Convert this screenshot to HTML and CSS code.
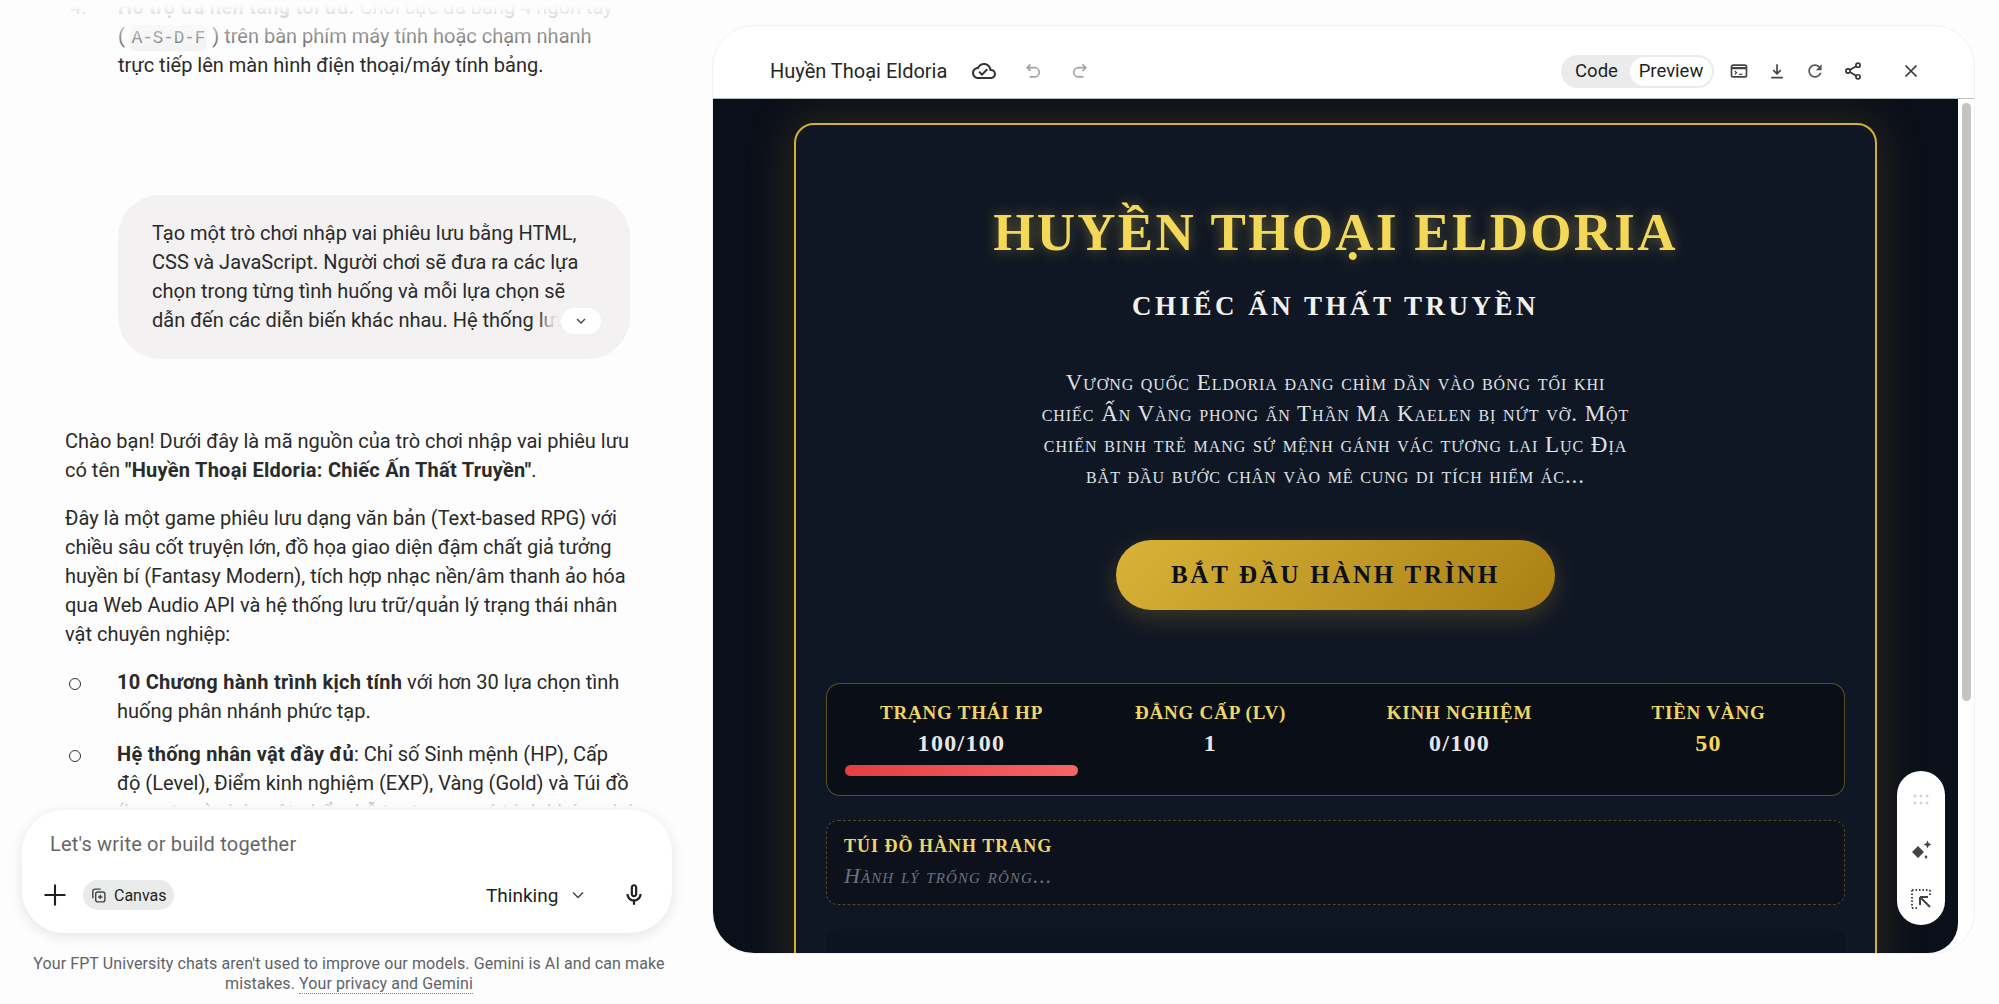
FILE: index.html
```html
<!DOCTYPE html>
<html lang="vi">
  <head>
    <meta charset="utf-8" />
    <title>Huyền Thoại Eldoria</title>
    <link rel="stylesheet" href="styles.css">
  </head>
  <body>
    <div class="page">
      <div class="left">
        <div class="chat">
          <div class="top-fade"></div>
          <ol class="tips">
            <li><span class="num">4.</span><div><b>Hỗ trợ đa nền tảng tối ưu:</b> Chơi cực đã bằng 4 ngón tay<br>( <code>A-S-D-F</code> ) trên bàn phím máy tính hoặc chạm nhanh<br>trực tiếp lên màn hình điện thoại/máy tính bảng.</div></li>
          </ol>
          <div class="bubble">
            <p>Tạo một trò chơi nhập vai phiêu lưu bằng HTML,<br>CSS và JavaScript. Người chơi sẽ đưa ra các lựa<br>chọn trong từng tình huống và mỗi lựa chọn sẽ<br>dẫn đến các diễn biến khác nhau. Hệ thống lưu</p>
            <span class="expand">
              <svg viewBox="0 0 24 24" width="16" height="16"><path d="M6 9l6 6 6-6" fill="none" stroke="#444" stroke-width="2"/></svg>
            </span>
          </div>
          <div class="answer">
            <p>Chào bạn! Dưới đây là mã nguồn của trò chơi nhập vai phiêu lưu<br>có tên <b>"Huyền Thoại Eldoria: Chiếc Ấn Thất Truyền"</b>.</p>
            <p>Đây là một game phiêu lưu dạng văn bản (Text-based RPG) với<br>chiều sâu cốt truyện lớn, đồ họa giao diện đậm chất giả tưởng<br>huyền bí (Fantasy Modern), tích hợp nhạc nền/âm thanh ảo hóa<br>qua Web Audio API và hệ thống lưu trữ/quản lý trạng thái nhân<br>vật chuyên nghiệp:</p>
            <ul class="bullets">
              <li><b>10 Chương hành trình kịch tính</b> với hơn 30 lựa chọn tình<br>huống phân nhánh phức tạp.</li>
              <li><b>Hệ thống nhân vật đầy đủ</b>: Chỉ số Sinh mệnh (HP), Cấp<br>độ (Level), Điểm kinh nghiệm (EXP), Vàng (Gold) và Túi đồ<br>(Inventory) chứa vật phẩm hỗ trợ trong quá trình khám phá.</li>
            </ul>
          </div>
          <div class="bottom-fade"></div>
        </div>
        <div class="composer">
          <div class="placeholder">Let's write or build together</div>
          <div class="composer-row">
            <svg class="plus" viewBox="0 0 24 24" width="28" height="28"><path d="M12 3v18M3 12h18" stroke="#1f1f1f" stroke-width="1.8" fill="none"/></svg>
            <span class="chip">
              <svg viewBox="0 0 24 24" width="17" height="17" fill="none" stroke="#444" stroke-width="2"><rect x="8" y="7" width="13" height="14" rx="3"/><path d="M4 16V6a3 3 0 0 1 3-3h8M14.500 11v6M11.500 14h6"/></svg>
              Canvas
            </span>
            <span class="model">Thinking</span>
            <svg class="model-arrow" viewBox="0 0 24 24" width="20" height="20"><path d="M6 9l6 6 6-6" fill="none" stroke="#444" stroke-width="1.800"/></svg>
            <svg class="mic" viewBox="0 0 24 24" width="26" height="26"><path fill="#1f1f1f" d="M12 14c1.660 0 3-1.340 3-3V5c0-1.660-1.340-3-3-3S9 3.340 9 5v6c0 1.660 1.340 3 3 3zm-1-9c0-.55.45-1 1-1s1 .45 1 1v6c0 .55-.45 1-1 1s-1-.45-1-1V5zm6 6c0 2.760-2.240 5-5 5s-5-2.240-5-5H5c0 3.530 2.610 6.430 6 6.920V21h2v-3.080c3.390-.49 6-3.390 6-6.920h-2z"/></svg>
          </div>
        </div>
        <div class="disclaimer">Your FPT University chats aren't used to improve our models. Gemini is AI and can make mistakes. <a>Your privacy and Gemini</a></div>
      </div>

      <div class="panel">
        <div class="panel-head">
          <span class="doc-title">Huyền Thoại Eldoria</span>
          <svg class="ic-cloud" viewBox="0 0 24 24" width="24" height="24"><path fill="#333" d="M19.350 10.040C18.670 6.590 15.640 4 12 4 9.110 4 6.600 5.640 5.350 8.040 2.340 8.360 0 10.910 0 14c0 3.310 2.690 6 6 6h13c2.760 0 5-2.240 5-5 0-2.640-2.050-4.780-4.650-4.960zM19 18H6c-2.210 0-4-1.790-4-4 0-2.050 1.530-3.760 3.560-3.970l1.070-.11.5-.95C8.080 7.140 9.940 6 12 6c2.620 0 4.880 1.860 5.390 4.430l.3 1.500 1.530.11c1.560.1 2.780 1.410 2.780 2.960 0 1.650-1.350 3-3 3zm-9-3.820l-2.090-2.090L6.500 13.500 10 17l6.010-6.010-1.410-1.410z"/></svg>
          <svg class="ic-undo" viewBox="0 0 24 24" width="20" height="20" fill="none" stroke="#a3a3a3" stroke-width="2"><path d="M9 4L5 8l4 4M5 8h9a5 5 0 0 1 0 11H8"/></svg>
          <svg class="ic-redo" viewBox="0 0 24 24" width="20" height="20" fill="none" stroke="#a3a3a3" stroke-width="2"><path d="M15 4l4 4-4 4M19 8h-9a5 5 0 0 0 0 11h6"/></svg>
          <div class="head-right">
            <div class="toggle">
              <span class="tab">Code</span>
              <span class="tab active">Preview</span>
            </div>
            <svg class="ic-term" viewBox="0 0 24 24" width="20" height="20" fill="none" stroke="#444" stroke-width="2"><rect x="3" y="5" width="18" height="14" rx="2"/><path d="M3 8.500h18" stroke-width="2.500"/><path d="M7 12l2 2-2 2M12 16h4" stroke-width="1.500"/></svg>
            <svg class="ic-down" viewBox="0 0 24 24" width="20" height="20" fill="none" stroke="#444" stroke-width="2"><path d="M12 4v11M7.500 11l4.500 4.500 4.500-4.500M5 20h14"/></svg>
            <svg class="ic-refresh" viewBox="0 0 24 24" width="20" height="20"><path fill="#555" d="M17.650 6.350C16.200 4.900 14.210 4 12 4c-4.420 0-7.990 3.580-7.990 8s3.570 8 7.990 8c3.730 0 6.840-2.550 7.730-6h-2.080c-.82 2.330-3.040 4-5.650 4-3.310 0-6-2.690-6-6s2.690-6 6-6c1.660 0 3.140.69 4.220 1.780L13 11h7V4l-2.350 2.350z"/></svg>
            <svg class="ic-share" viewBox="0 0 24 24" width="20" height="20" fill="none" stroke="#333" stroke-width="2"><circle cx="18" cy="5" r="2.500"/><circle cx="6" cy="12" r="2.500"/><circle cx="18" cy="19" r="2.500"/><path d="M8.200 10.800l7.600-4.500M8.200 13.200l7.600 4.500"/></svg>
            <svg class="ic-close" viewBox="0 0 24 24" width="22" height="22" fill="none" stroke="#333" stroke-width="1.800"><path d="M6 6l12 12M18 6L6 18"/></svg>
          </div>
        </div>

        <div class="preview">
          <div class="game">
            <div class="frame">
              <h1>HUYỀN THOẠI ELDORIA</h1>
              <h2>CHIẾC ẤN THẤT TRUYỀN</h2>
              <p class="story">Vương quốc Eldoria đang chìm dần vào bóng tối khi<br>chiếc Ấn Vàng phong ấn Thần Ma Kaelen bị nứt vỡ. Một<br>chiến binh trẻ mang sứ mệnh gánh vác tương lai Lục Địa<br>bắt đầu bước chân vào mê cung di tích hiểm ác...</p>
              <button class="start">BẮT ĐẦU HÀNH TRÌNH</button>
              <div class="stats">
                <div class="stat">
                  <div class="stat-label">TRẠNG THÁI HP</div>
                  <div class="stat-value">100/100</div>
                  <div class="hp-bar"></div>
                </div>
                <div class="stat">
                  <div class="stat-label">ĐẲNG CẤP (LV)</div>
                  <div class="stat-value">1</div>
                </div>
                <div class="stat">
                  <div class="stat-label">KINH NGHIỆM</div>
                  <div class="stat-value">0/100</div>
                </div>
                <div class="stat">
                  <div class="stat-label">TIỀN VÀNG</div>
                  <div class="stat-value gold">50</div>
                </div>
              </div>
              <div class="inventory">
                <div class="inv-title">TÚI ĐỒ HÀNH TRANG</div>
                <div class="inv-empty">Hành lý trống rỗng...</div>
              </div>
              <div class="story-box"></div>
            </div>
          </div>
          <div class="scroll-track"><div class="scroll-thumb"></div></div>

          <div class="tools">
            <svg viewBox="0 0 16 12" width="16" height="12" fill="#d4d4d4"><circle cx="2" cy="2" r="1.500"/><circle cx="8" cy="2" r="1.500"/><circle cx="14" cy="2" r="1.500"/><circle cx="2" cy="9" r="1.500"/><circle cx="8" cy="9" r="1.500"/><circle cx="14" cy="9" r="1.500"/></svg>
            <svg class="tool-spark" viewBox="0 0 24 24" width="24" height="24" fill="#444"><path d="M9 7l6 6-6 6-6-6zM18.500 1.500l1.200 2.800 2.800 1.200-2.800 1.200-1.200 2.800-1.200-2.800-2.800-1.200 2.800-1.200zM17 16l1.500 2-1.500 2-1.500-2z"/></svg>
            <svg class="tool-select" viewBox="0 0 24 24" width="24" height="24" fill="none" stroke="#444"><path d="M3 3h18M3 3v18M21 3v7M3 21h7" stroke-width="2" stroke-dasharray="1.500 2"/><path d="M11 10h8M11 10v8M11.500 10.500L21 20" stroke-width="2"/></svg>
          </div>
        </div>
      </div>
    </div>
  </body>
</html>
```

FILE: styles.css
```css
* {
  box-sizing: border-box;
  margin: 0;
  padding: 0;
}

html,
body {
  height: 100%;
  overflow: hidden;
}

body {
  background: #fdfdfd;
  color: #1f1f1f;
  font-family: Roboto, 'Noto Sans', sans-serif;
}

svg {
  display: block;
  flex: none;
}

.page {
  display: flex;
  height: 100vh;
}

/* chat column */
.left {
  width: 712px;
  flex: none;
  display: flex;
  flex-direction: column;
  height: 100%;
}

.chat {
  position: relative;
  height: 810px;
  overflow: hidden;
  font-size: 20px;
  line-height: 29px;
  color: #2a2a2a;
}

.chat b {
  letter-spacing: 0.27px;
}

.top-fade {
  position: absolute;
  top: 0;
  left: 0;
  right: 0;
  height: 62px;
  background: linear-gradient(#fdfdfd 8%, rgba(253, 253, 253, 0.65) 45%, rgba(253, 253, 253, 0));
  z-index: 2;
}

.bottom-fade {
  position: absolute;
  bottom: 0;
  left: 0;
  right: 0;
  height: 14px;
  background: linear-gradient(rgba(253, 253, 253, 0), #fdfdfd 80%);
}

.tips {
  list-style: none;
  margin-top: -7px;
  padding-left: 70px;
}

.tips li {
  display: flex;
  white-space: nowrap;
}

.tips .num {
  width: 48px;
  flex: none;
}

.tips code {
  font-family: 'Liberation Mono', monospace;
  font-size: 17.500px;
  line-height: 1;
  background: #f0f0f0;
  border-radius: 6px;
  padding: 3px 2px;
  color: #444;
}

.bubble {
  position: relative;
  margin: 115px 0 0 118px;
  width: 512px;
  height: 164px;
  padding: 24px 30px 0 34px;
  background: #f3f1f2;
  border-radius: 42px;
  white-space: nowrap;
  overflow: hidden;
}

.expand {
  position: absolute;
  right: 29px;
  top: 113px;
  width: 40px;
  height: 26px;
  background: #fff;
  border-radius: 13px;
  display: flex;
  align-items: center;
  justify-content: center;
  box-shadow: -14px 0 12px 2px #f3f1f2;
}

.answer {
  margin-top: 68px;
  padding-left: 65px;
}

.answer p {
  margin-bottom: 19px;
  white-space: nowrap;
}

.bullets {
  list-style: none;
  padding-left: 52px;
}

.bullets li {
  position: relative;
  margin-bottom: 14px;
  white-space: nowrap;
}

.bullets li::before {
  content: '';
  position: absolute;
  left: -48px;
  top: 10px;
  width: 10px;
  height: 10px;
  border: 1.500px solid #333;
  border-radius: 50%;
}

/* input box */
.composer {
  margin-left: 22px;
  width: 650px;
  height: 123px;
  background: #fff;
  border-radius: 42px;
  box-shadow: 0 3px 14px rgba(0, 0, 0, 0.1);
  padding: 21px 0 0 28px;
  position: relative;
  z-index: 3;
}

.placeholder {
  font-size: 20px;
  line-height: 26px;
  letter-spacing: 0.2px;
  color: #666;
}

.composer-row {
  display: flex;
  align-items: center;
  margin-top: 20px;
  margin-left: -9px;
  height: 36px;
}

.chip {
  display: flex;
  align-items: center;
  gap: 7px;
  margin-left: 14px;
  height: 30px;
  width: 91px;
  padding-left: 7px;
  background: #e9eaea;
  border-radius: 15px;
  font-size: 16px;
}

.model {
  margin-left: 312px;
  font-size: 19px;
  width: 68px;
}

.model-arrow {
  margin-left: 14px;
}

.mic {
  margin-left: 33px;
}

.disclaimer {
  margin-top: 21px;
  padding: 0 40px 0 26px;
  text-align: center;
  font-size: 16px;
  line-height: 20px;
  letter-spacing: 0.1px;
  color: #5f6368;
}

.disclaimer a {
  border-bottom: 1px dotted #888;
}

/* canvas panel */
.panel {
  margin-top: 25px;
  width: 1263px;
  height: 929px;
  background: #fff;
  border: 1px solid #f1f1f1;
  border-radius: 42px;
  overflow: hidden;
  display: flex;
  flex-direction: column;
}

.panel-head {
  height: 72px;
  flex: none;
  display: flex;
  align-items: center;
  padding: 18px 0 0 57px;
}

.doc-title {
  font-size: 20px;
  width: 176px;
  white-space: nowrap;
  color: #262626;
}

.ic-cloud {
  margin-left: 26px;
}

.ic-undo {
  margin-left: 27px;
}

.ic-redo {
  margin-left: 27px;
}

.head-right {
  margin-left: auto;
  padding-right: 52px;
  display: flex;
  align-items: center;
}

.toggle {
  display: flex;
  align-items: center;
  width: 153px;
  height: 33px;
  padding: 2px;
  background: #ebebeb;
  border-radius: 17px;
  font-size: 18.500px;
  margin-right: 15px;
}

.tab {
  width: 67px;
  text-align: center;
}

.tab.active {
  width: 82px;
  height: 29px;
  line-height: 29px;
  background: #fff;
  border-radius: 15px;
}

.ic-down,
.ic-refresh,
.ic-share {
  margin-left: 18px;
}

.ic-close {
  margin-left: 37px;
}

.preview {
  position: relative;
  flex: 1;
  display: flex;
  min-height: 0;
  border-top: 1px solid #b9bcc2;
}

.game {
  width: 1245px;
  flex: none;
  padding: 24px 81px 0 81px;
  background: #0b0f19;
  border-bottom-right-radius: 30px;
  overflow: hidden;
}

.frame {
  height: 1000px;
  border: 2px solid #d4af37;
  border-radius: 20px;
  background: #101724;
  box-shadow: 0 0 50px rgba(212, 175, 55, 0.18);
  padding: 0 30px;
  display: flex;
  flex-direction: column;
  align-items: center;
  font-family: 'Liberation Serif', serif;
}

.frame h1 {
  margin-top: 77px;
  font-size: 53px;
  line-height: 60px;
  letter-spacing: 2.300px;
  color: #f4d858;
  text-shadow: 0 0 14px rgba(244, 216, 88, 0.4);
  white-space: nowrap;
}

.frame h2 {
  margin-top: 27px;
  font-size: 27px;
  line-height: 34px;
  letter-spacing: 3.500px;
  color: #f1f1ee;
  white-space: nowrap;
}

.story {
  margin-top: 44px;
  font-size: 23px;
  line-height: 31px;
  letter-spacing: 0.950px;
  font-variant: small-caps;
  color: #dfe2e6;
  text-align: center;
  white-space: nowrap;
}

.start {
  margin-top: 49px;
  width: 439px;
  height: 70px;
  border: none;
  border-radius: 35px;
  background: linear-gradient(135deg, #d9b338, #a97f14);
  box-shadow: 0 8px 24px rgba(212, 175, 55, 0.22);
  font-family: 'Liberation Serif', serif;
  font-weight: bold;
  font-size: 25px;
  letter-spacing: 2.700px;
  color: #0b0f19;
}

.stats {
  margin-top: 73px;
  width: 1019px;
  height: 113px;
  flex: none;
  display: grid;
  grid-template-columns: repeat(4, 233px);
  gap: 16px;
  padding: 17px 18px 0;
  background: #0a0e17;
  border: 1px solid rgba(212, 175, 55, 0.4);
  border-radius: 14px;
}

.stat {
  text-align: center;
}

.stat-label {
  font-size: 19px;
  line-height: 24px;
  font-weight: bold;
  letter-spacing: 0.800px;
  color: #eed664;
  white-space: nowrap;
}

.stat-value {
  margin-top: 5px;
  font-size: 24px;
  line-height: 26px;
  font-weight: bold;
  letter-spacing: 1.300px;
  color: #e5e7eb;
}

.stat-value.gold {
  color: #f4d858;
}

.hp-bar {
  margin-top: 9px;
  height: 11px;
  border-radius: 6px;
  background: linear-gradient(90deg, #e53e3e, #f56565);
}

.inventory {
  margin-top: 24px;
  width: 1019px;
  height: 85px;
  flex: none;
  padding: 13px 17px 0;
  background: #0c111c;
  border: 1px dashed rgba(212, 175, 55, 0.35);
  border-radius: 12px;
}

.inv-title {
  font-size: 18px;
  line-height: 24px;
  font-weight: bold;
  letter-spacing: 1px;
  color: #eed664;
}

.inv-empty {
  margin-top: 6px;
  font-size: 22px;
  line-height: 24px;
  letter-spacing: 1.100px;
  font-style: italic;
  font-variant: small-caps;
  color: #6b7280;
}

.story-box {
  margin-top: 24px;
  width: 1019px;
  height: 100px;
  flex: none;
  background: #0d1320;
  border-radius: 12px;
}

.scroll-track {
  flex: 1;
  padding: 4px 3px 0 4px;
}

.scroll-thumb {
  width: 9px;
  height: 598px;
  background: #c4c4c4;
  border-radius: 5px;
}

/* floating tool pill over the game */
.tools {
  position: absolute;
  left: 1184px;
  top: 672px;
  width: 48px;
  height: 154px;
  background: #fff;
  border-radius: 24px;
  display: flex;
  flex-direction: column;
  align-items: center;
  padding-top: 23px;
}

.tool-spark {
  margin-top: 33px;
}

.tool-select {
  margin-top: 24px;
}
```
